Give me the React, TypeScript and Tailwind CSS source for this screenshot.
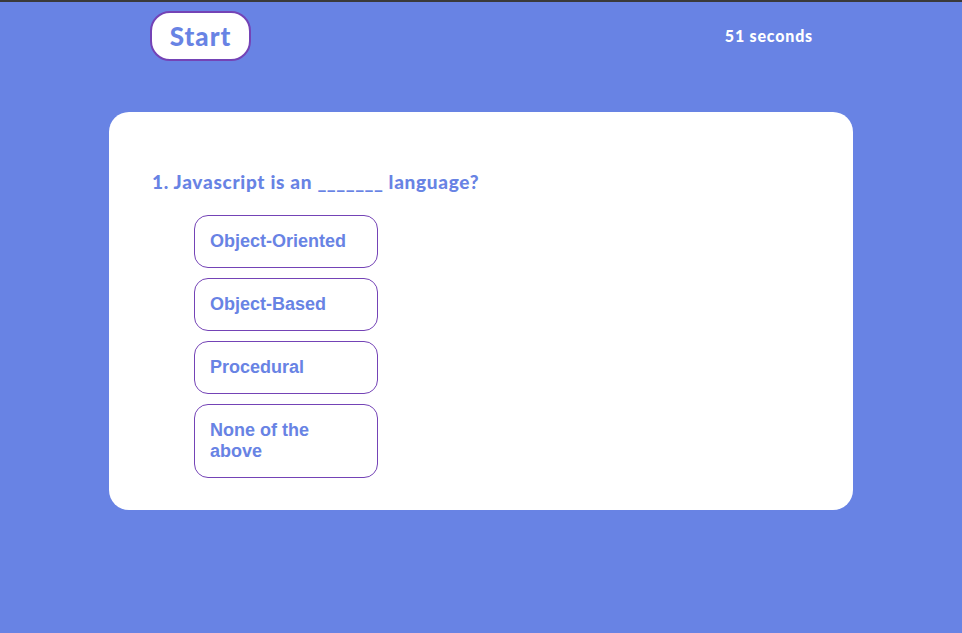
import React, { useState } from 'react'

const options = ['Object-Oriented', 'Object-Based', 'Procedural', 'None of the above']

export default function App() {
  const [picked, setPicked] = useState<number | null>(null)

  const gill = { fontFamily: '"Gill Sans", Lato, "Open Sans", sans-serif' }

  return (
    <div className="min-h-[633px] w-full bg-[#6883e4] border-t-2 border-[#3a3a3a]">
      {/* Header */}
      <div className="flex items-center justify-between pl-[150px] pr-[149px] pt-[9px]" style={gill}>
        <button className="w-[101px] h-[50px] rounded-[20px] border-2 border-[#7443b6] bg-white text-[#6883e4] text-[26px] font-black tracking-[1px]">
          Start
        </button>
        <span className="text-white text-[16px] font-black tracking-[0.8px]">51 seconds</span>
      </div>

      {/* Quiz card */}
      <div className="mx-auto mt-[51px] w-[744px] h-[398px] rounded-[20px] bg-white pl-[43px] pt-[58px]">
        <h2 className="text-[#6883e4] text-[19px] font-black tracking-[0.7px] leading-[24px]" style={gill}>
          1. Javascript is an <span className="tracking-[0.5px]">_______</span> language?
        </h2>
        <div className="mt-[21px] ml-[42px] flex flex-col gap-[10px]">
          {options.map((o, i) => (
            <button key={o} onClick={() => setPicked(i)}
              className={"w-[184px] text-left rounded-[14px] border border-[#7443b6] px-[15px] py-[15px] text-[18px] leading-[21px] font-bold text-[#6883e4] " + (picked === i ? 'bg-[#eef1fc]' : 'bg-white')}
              style={{ fontFamily: '"Liberation Sans", Arial, sans-serif' }}>
              {o === 'None of the above' ? <>None of the<br />above</> : o}
            </button>
          ))}
        </div>
      </div>
    </div>
  )
}
